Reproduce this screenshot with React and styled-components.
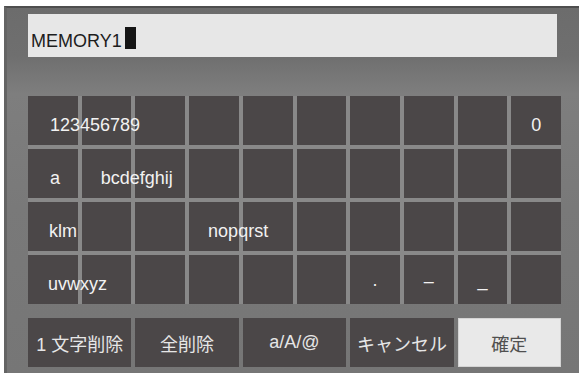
import React from 'react';
import styled, { createGlobalStyle } from 'styled-components';

const GlobalStyle = createGlobalStyle`
  body {
    margin: 0;
    background: #ffffff;
    font-family: "Liberation Sans", "Noto Sans CJK JP", sans-serif;
  }
`;

const Panel = styled.div`
  margin: 6px 0 0 4px;
  height: 367px;
  box-sizing: border-box;
  border-top: 2px solid #4e4e4e;
  border-left: 3px solid #646464;
  padding: 6px 0 0 21px;
  overflow: hidden;
  background: linear-gradient(
    to bottom,
    #6c6c6c 0px,
    #6f6f6f 48px,
    #7e7e7e 86px,
    #797979 200px,
    #767676 100%
  );
`;

const InputField = styled.div`
  width: 529px;
  height: 43px;
  box-sizing: border-box;
  background: #e7e7e7;
  display: flex;
  align-items: flex-end;
  padding: 0 0 5px 3px;
  font-size: 18px;
  line-height: 22px;
  color: #1d1d1d;
`;

const Cursor = styled.span`
  display: inline-block;
  width: 11px;
  height: 22px;
  margin: 0 0 3px 3px;
  background: #151515;
`;

const KeyGrid = styled.div`
  margin-top: 39px;
  width: 533px;
  display: grid;
  grid-template-columns: repeat(10, minmax(0, 1fr));
  grid-auto-rows: 49px;
  gap: 4px;
  background: #898989;
`;

const Cell = styled.div`
  min-width: 0;
  background: #4b4748;
  display: flex;
  align-items: center;
  justify-content: ${(p) => (p.$center ? 'center' : 'flex-start')};
  padding: ${(p) => 10 - (p.$lift || 0)}px 0 0 ${(p) => (p.$center ? 0 : p.$pad)}px;
  box-sizing: border-box;
  color: #f2f2f2;
  font-size: 18px;
  white-space: nowrap;
`;

const Label = styled.span`
  position: relative;
  z-index: 1;
`;

const ActionRow = styled.div`
  margin-top: 14px;
  width: 533px;
  display: grid;
  grid-template-columns: repeat(10, minmax(0, 1fr));
  grid-auto-rows: 49px;
  gap: 4px;
`;

const ActionButton = styled.div`
  grid-column: span 2;
  min-width: 0;
  display: flex;
  align-items: center;
  justify-content: center;
  font-size: 18px;
  white-space: nowrap;
  background: ${(p) => (p.$primary ? '#e9e9e9' : '#4b4748')};
  color: ${(p) => (p.$primary ? '#505050' : '#e6e6e6')};
  box-shadow: ${(p) => (p.$primary ? 'inset 0 0 0 1px #d4d4d4' : 'none')};
`;

const rows = [
  { 0: { text: '123456789', pad: 22 }, 9: { text: '0', center: true } },
  { 0: { text: 'a', pad: 22 }, 1: { text: 'bcdefghij', pad: 19 } },
  { 0: { text: 'klm', pad: 21 }, 3: { text: 'nopqrst', pad: 19 } },
  {
    0: { text: 'uvwxyz', pad: 20 },
    6: { text: '.', center: true, lift: 8 },
    7: { text: '–', center: true, lift: 6 },
    8: { text: '_', center: true, lift: 8 },
  },
];

const actions = ['1 文字削除', '全削除', 'a/A/@', 'キャンセル', '確定'];

const App = () => (
  <>
    <GlobalStyle />
    <Panel>
      <InputField>
        MEMORY1
        <Cursor />
      </InputField>
      <KeyGrid>
        {rows.map((row, r) =>
          Array.from({ length: 10 }, (_, c) => {
            const key = row[c];
            return (
              <Cell
                key={`${r}-${c}`}
                $center={key && key.center}
                $pad={key ? key.pad : 0}
                $lift={key ? key.lift : 0}
              >
                {key && <Label>{key.text}</Label>}
              </Cell>
            );
          })
        )}
      </KeyGrid>
      <ActionRow>
        {actions.map((a, i) => (
          <ActionButton key={a} $primary={i === actions.length - 1}>
            {a}
          </ActionButton>
        ))}
      </ActionRow>
    </Panel>
  </>
);

export default App;
